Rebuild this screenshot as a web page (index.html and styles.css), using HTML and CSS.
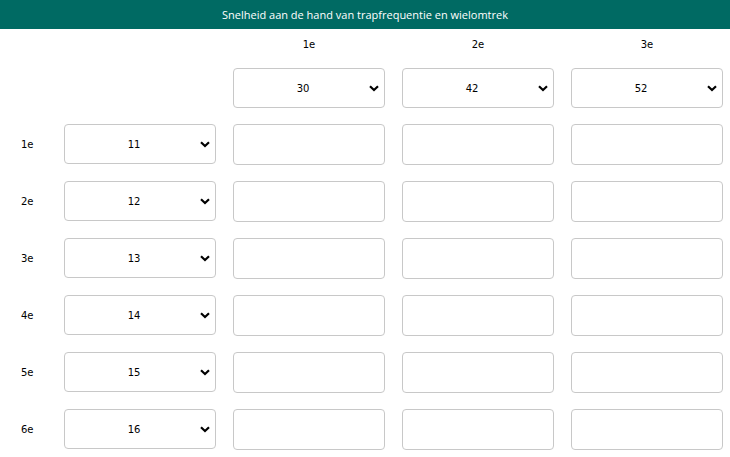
FILE: index.html
```html
<!DOCTYPE html>
<html lang="nl">
<head>
<meta charset="utf-8">
<title>Snelheid</title>
<link rel="stylesheet" href="styles.css">
</head>
<body>
<div class="bar">Snelheid aan de hand van trapfrequentie en wielomtrek</div>
<div class="grid">
  <div></div><div></div>
  <div class="colhead">1e</div><div class="colhead">2e</div><div class="colhead">3e</div>

  <div></div><div></div>
  <div class="sel"><select><option>30</option></select><svg class="chev" viewBox="0 0 10 7"><path d="M1 1.2 L5 5 L9 1.2" /></svg></div>
  <div class="sel"><select><option>42</option></select><svg class="chev" viewBox="0 0 10 7"><path d="M1 1.2 L5 5 L9 1.2" /></svg></div>
  <div class="sel"><select><option>52</option></select><svg class="chev" viewBox="0 0 10 7"><path d="M1 1.2 L5 5 L9 1.2" /></svg></div>

  <div class="rowhead">1e</div>
  <div class="sel"><select><option>11</option></select><svg class="chev" viewBox="0 0 10 7"><path d="M1 1.2 L5 5 L9 1.2" /></svg></div>
  <input class="field" type="text"><input class="field" type="text"><input class="field" type="text">

  <div class="rowhead">2e</div>
  <div class="sel"><select><option>12</option></select><svg class="chev" viewBox="0 0 10 7"><path d="M1 1.2 L5 5 L9 1.2" /></svg></div>
  <input class="field" type="text"><input class="field" type="text"><input class="field" type="text">

  <div class="rowhead">3e</div>
  <div class="sel"><select><option>13</option></select><svg class="chev" viewBox="0 0 10 7"><path d="M1 1.2 L5 5 L9 1.2" /></svg></div>
  <input class="field" type="text"><input class="field" type="text"><input class="field" type="text">

  <div class="rowhead">4e</div>
  <div class="sel"><select><option>14</option></select><svg class="chev" viewBox="0 0 10 7"><path d="M1 1.2 L5 5 L9 1.2" /></svg></div>
  <input class="field" type="text"><input class="field" type="text"><input class="field" type="text">

  <div class="rowhead">5e</div>
  <div class="sel"><select><option>15</option></select><svg class="chev" viewBox="0 0 10 7"><path d="M1 1.2 L5 5 L9 1.2" /></svg></div>
  <input class="field" type="text"><input class="field" type="text"><input class="field" type="text">

  <div class="rowhead">6e</div>
  <div class="sel"><select><option>16</option></select><svg class="chev" viewBox="0 0 10 7"><path d="M1 1.2 L5 5 L9 1.2" /></svg></div>
  <input class="field" type="text"><input class="field" type="text"><input class="field" type="text">
</div>
</body>
</html>
```
FILE: styles.css
```css
html, body {
  margin: 0;
  padding: 0;
  background: #fff;
  font-family: "DejaVu Sans", Verdana, sans-serif;
  color: #000;
}
.bar {
  height: 29px;
  line-height: 29px;
  background: #006a63;
  color: #fff;
  text-align: center;
  font-family: "Open Sans", Tahoma, sans-serif;
  font-size: 11px;
}
.grid {
  display: grid;
  grid-template-columns: 47px repeat(4, 152px);
  grid-template-rows: 23px 40px repeat(6, 41px);
  column-gap: 17px;
  row-gap: 16px;
}
.colhead {
  align-self: end;
  text-align: center;
  font-size: 10px;
  line-height: 13px;
  margin-bottom: 1px;
}
.rowhead {
  align-self: center;
  font-size: 10px;
  padding-left: 21px;
}
.sel {
  position: relative;
  height: 40px;
}
.sel select {
  appearance: none;
  -webkit-appearance: none;
  width: 100%;
  height: 40px;
  margin: 0;
  box-sizing: border-box;
  border: 1px solid #c8c8c8;
  border-radius: 4px;
  background: #fff;
  font-family: "DejaVu Sans", Verdana, sans-serif;
  font-size: 10px;
  color: #000;
  text-align: center;
  text-align-last: center;
  padding: 0 12px 0 0;
}
.chev {
  position: absolute;
  right: 6px;
  top: 17px;
  width: 10px;
  height: 7px;
  pointer-events: none;
}
.chev path {
  fill: none;
  stroke: #000;
  stroke-width: 2.2;
}
.field {
  width: 100%;
  height: 41px;
  margin: 0;
  box-sizing: border-box;
  border: 1px solid #c8c8c8;
  border-radius: 4px;
  background: #fff;
}
```
